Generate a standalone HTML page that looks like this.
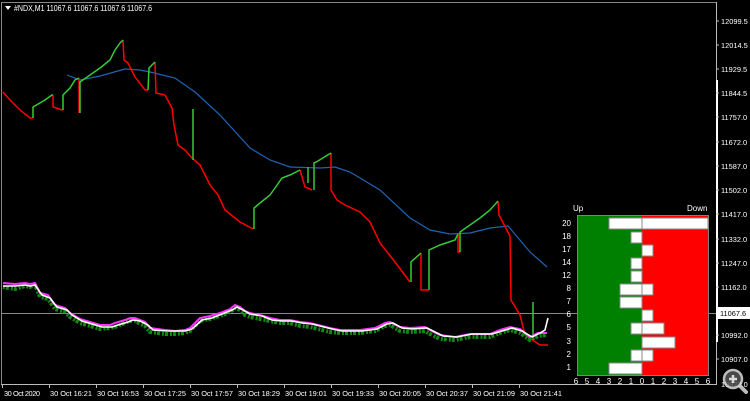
<!DOCTYPE html>
<html><head><meta charset="utf-8"><style>
html,body{margin:0;padding:0;background:#000;width:750px;height:401px;overflow:hidden}
svg{display:block}
text{font-family:"Liberation Sans",sans-serif;font-size:8px;fill:#fff}
.t{font-size:7.4px}
</style></head><body>
<svg width="750" height="401" viewBox="0 0 750 401">
<rect width="750" height="401" fill="#000"/>
<line x1="1.5" y1="2" x2="1.5" y2="385" stroke="#888" stroke-width="1"/>
<line x1="1" y1="2.5" x2="716" y2="2.5" stroke="#888" stroke-width="1"/>
<line x1="716.5" y1="2" x2="716.5" y2="385" stroke="#bbb" stroke-width="1"/>
<line x1="1" y1="384.5" x2="716" y2="384.5" stroke="#bbb" stroke-width="1"/>
<line x1="717" y1="80" x2="717" y2="342" stroke="#fff" stroke-width="2"/>
<polygon points="5,6 11,6 8,10" fill="#fff"/>
<text x="14" y="11" textLength="138" lengthAdjust="spacingAndGlyphs">#NDX,M1  11067.6 11067.6 11067.6 11067.6</text>
<line x1="2" y1="313.5" x2="716" y2="313.5" stroke="#888" stroke-width="1"/>
<polyline fill="none" stroke="#1f64b4" stroke-width="1.2" points="67,75 80,80 100,76 125,69 140,70 150,72 175,78 195,92 220,115 250,148 270,160 290,167 320,168 335,167 350,172 380,190 410,218 430,230 450,234 470,233 490,228 508,226 530,252 547,267"/>
<g fill="none" stroke="#ff0000" stroke-width="1.5">
<polyline points="3,92 10,100 20,110 30,118 33,118"/>
<polyline points="53,95 53,107 62,110 63,110"/>
<polyline points="79,78 79,113"/>
<polyline points="123,40 124,60 128,63 135,77 145,90 148,90"/>
<polyline points="155,62 156,93 165,95 172,108 174,125 178,145 185,150 192,158 200,165 205,175 210,185 218,195 225,210 240,222 253,229"/>
<polyline points="300,170 305,187 312,190"/>
<polyline points="331,153 331,190 337,200 345,205 360,212 370,222 380,243 395,262 410,282"/>
<polyline points="421,253 421,290 429,290"/>
<polyline points="458,234 458,252 460,252"/>
<polyline points="498,201 499,215 510,236 511,300 520,315 525,335 540,345 548,345"/>
</g>
<g fill="none" stroke="#33cc33" stroke-width="1.5">
<polyline points="33,118 33,107 45,100 52,95 53,95"/>
<polyline points="63,110 63,95 70,88 75,80 79,78"/>
<polyline points="80,113 80,82 90,75 100,68 110,60 115,50 120,43 123,40"/>
<polyline points="148,90 149,68 155,62"/>
<polyline points="193,109 193,160"/>
<polyline points="254,229 254,208 260,203 270,195 275,188 282,178 290,175 300,170"/>
<polyline points="308,167 308,183"/>
<polyline points="314,190 314,163 318,161 326,156 331,153"/>
<polyline points="411,282 411,262 421,253"/>
<polyline points="429,290 429,250 440,245 455,240 458,234"/>
<polyline points="460,252 460,232 470,225 480,218 490,210 498,201"/>
<polyline points="533,302 533,340"/>
</g>
<polyline fill="none" stroke="#128a12" stroke-width="4" stroke-dasharray="2 1 3 2" points="3,287 15,289 25,286 30,287 35,285 40,297 48,299 55,309 65,312 70,317 80,323 90,326 100,329 110,328 115,327 125,323 130,321 135,321 145,326 150,332 165,334 175,334 185,333 190,331 200,321 210,319 220,316 230,312 235,308 240,310 245,315 250,317 260,319 270,321 280,323 290,323 300,326 310,327 318,329 330,332 340,333 360,333 375,331 385,326 390,325 400,331 410,332 425,331 430,334 440,339 455,340 470,337 490,337 500,333 510,330 520,333 530,340 538,336 547,335"/>
<polyline fill="none" stroke="#ff33ff" stroke-width="2" points="3,283 15,284 25,283 30,284 35,283 40,293 48,295 55,305 65,308 70,313 80,319 90,322 100,325 110,325 115,323 125,320 130,318 135,318 145,322 150,328 165,330 175,331 185,330 190,328 200,318 210,316 220,313 230,309 235,305 240,307 245,311 250,313 260,315 270,318 280,320 290,320 300,322 310,323 318,325 330,328 340,330 360,330 375,328 385,323 390,322 400,327 410,328 425,327 430,330 440,335 455,337 470,334 490,334 500,330 510,327 520,329 530,337 538,333 547,333"/>
<polyline fill="none" stroke="#fff" stroke-width="1.6" points="3,286 15,286 25,285 30,286 35,285 42,295 50,298 57,307 67,310 72,315 82,321 92,324 102,327 112,327 118,325 128,322 133,320 140,321 148,325 153,330 168,331 185,331 192,329 202,320 212,318 222,314 232,310 237,307 243,310 250,314 262,316 272,320 282,321 292,321 302,323 312,324 320,326 332,329 342,331 362,331 377,329 387,324 393,323 402,328 412,329 427,328 433,331 443,336 457,337 472,334 492,334 502,331 512,328 522,331 532,337 540,333 545,330 548,318"/>
<rect x="578" y="216" width="64" height="159" fill="#008000"/>
<rect x="642" y="216" width="66" height="159" fill="#ff0000"/>
<rect x="577.5" y="215.5" width="131" height="160" fill="none" stroke="#808080"/>
<text x="573" y="211">Up</text>
<text x="687" y="211">Down</text>
<g fill="#fff" stroke="#888" stroke-width="1">
<rect x="609" y="218" width="33" height="11"/><rect x="642" y="218" width="66" height="11"/>
<rect x="631" y="232" width="11" height="11"/>
<rect x="642" y="245" width="11" height="11"/>
<rect x="631" y="258" width="11" height="11"/>
<rect x="631" y="271" width="11" height="11"/>
<rect x="620" y="284" width="22" height="11"/><rect x="642" y="284" width="11" height="11"/>
<rect x="620" y="297" width="22" height="11"/>
<rect x="642" y="310" width="11" height="11"/>
<rect x="631" y="323" width="11" height="11"/><rect x="642" y="323" width="22" height="11"/>
<rect x="642" y="337" width="33" height="11"/>
<rect x="631" y="350" width="11" height="11"/><rect x="642" y="350" width="11" height="11"/>
<rect x="609" y="363" width="33" height="11"/>
</g>
<g text-anchor="end">
<text x="571" y="226">20</text><text x="571" y="239">18</text><text x="571" y="252">17</text>
<text x="571" y="265">14</text><text x="571" y="278">12</text><text x="571" y="291">8</text>
<text x="571" y="304">7</text><text x="571" y="317">6</text><text x="571" y="330">5</text>
<text x="571" y="344">3</text><text x="571" y="357">2</text><text x="571" y="370">1</text>
</g>
<g text-anchor="middle">
<text x="576" y="384">6</text><text x="587" y="384">5</text><text x="598" y="384">4</text><text x="609" y="384">3</text><text x="620" y="384">2</text><text x="631" y="384">1</text><text x="642" y="384">0</text><text x="653" y="384">1</text><text x="664" y="384">2</text><text x="675" y="384">3</text><text x="686" y="384">4</text><text x="697" y="384">5</text><text x="708" y="384">6</text>
</g>
<g class="t">
<text class="t" x="721" y="24">12099.5</text><text class="t" x="721" y="48">12014.5</text><text class="t" x="721" y="72">11929.5</text><text class="t" x="721" y="96">11844.5</text><text class="t" x="721" y="120">11757.0</text><text class="t" x="721" y="145">11672.0</text><text class="t" x="721" y="169">11587.0</text><text class="t" x="721" y="193">11502.0</text><text class="t" x="721" y="217">11417.0</text><text class="t" x="721" y="242">11332.0</text><text class="t" x="721" y="266">11247.0</text><text class="t" x="721" y="290">11162.0</text><text class="t" x="721" y="338">10992.0</text><text class="t" x="721" y="362">10907.0</text><text class="t" x="721" y="387">10822.0</text>
</g>
<g stroke="#bbb"><line x1="716" y1="21" x2="719" y2="21"/><line x1="716" y1="45" x2="719" y2="45"/><line x1="716" y1="69" x2="719" y2="69"/><line x1="716" y1="93" x2="719" y2="93"/><line x1="716" y1="117" x2="719" y2="117"/><line x1="716" y1="142" x2="719" y2="142"/><line x1="716" y1="166" x2="719" y2="166"/><line x1="716" y1="190" x2="719" y2="190"/><line x1="716" y1="214" x2="719" y2="214"/><line x1="716" y1="239" x2="719" y2="239"/><line x1="716" y1="263" x2="719" y2="263"/><line x1="716" y1="287" x2="719" y2="287"/><line x1="716" y1="335" x2="719" y2="335"/><line x1="716" y1="359" x2="719" y2="359"/></g>
<rect x="717" y="307" width="33" height="12" fill="#fff"/>
<text class="t" x="720" y="316" style="fill:#000">11067.6</text>
<g>
<text class="t" x="4" y="396" textLength="36">30 Oct 2020</text><text class="t" x="50" y="396" textLength="42">30 Oct 16:21</text><text class="t" x="97" y="396" textLength="42">30 Oct 16:53</text><text class="t" x="144" y="396" textLength="42">30 Oct 17:25</text><text class="t" x="191" y="396" textLength="42">30 Oct 17:57</text><text class="t" x="238" y="396" textLength="42">30 Oct 18:29</text><text class="t" x="285" y="396" textLength="42">30 Oct 19:01</text><text class="t" x="332" y="396" textLength="42">30 Oct 19:33</text><text class="t" x="379" y="396" textLength="42">30 Oct 20:05</text><text class="t" x="426" y="396" textLength="42">30 Oct 20:37</text><text class="t" x="473" y="396" textLength="42">30 Oct 21:09</text><text class="t" x="520" y="396" textLength="42">30 Oct 21:41</text>
</g>
<g stroke="#bbb"><line x1="2.5" y1="385" x2="2.5" y2="388"/><line x1="49.5" y1="385" x2="49.5" y2="388"/><line x1="96.5" y1="385" x2="96.5" y2="388"/><line x1="143.5" y1="385" x2="143.5" y2="388"/><line x1="190.5" y1="385" x2="190.5" y2="388"/><line x1="237.5" y1="385" x2="237.5" y2="388"/><line x1="284.5" y1="385" x2="284.5" y2="388"/><line x1="331.5" y1="385" x2="331.5" y2="388"/><line x1="378.5" y1="385" x2="378.5" y2="388"/><line x1="425.5" y1="385" x2="425.5" y2="388"/><line x1="472.5" y1="385" x2="472.5" y2="388"/><line x1="519.5" y1="385" x2="519.5" y2="388"/></g>
<g opacity="0.85">
<line x1="740" y1="386" x2="746" y2="392" stroke="#ddd" stroke-width="4" stroke-linecap="round"/>
<circle cx="733" cy="379" r="9" fill="#555" stroke="#ddd" stroke-width="2.5"/>
<path d="M729 379h8M733 375v8" stroke="#fff" stroke-width="2.5"/>
</g>
</svg>
</body></html>
